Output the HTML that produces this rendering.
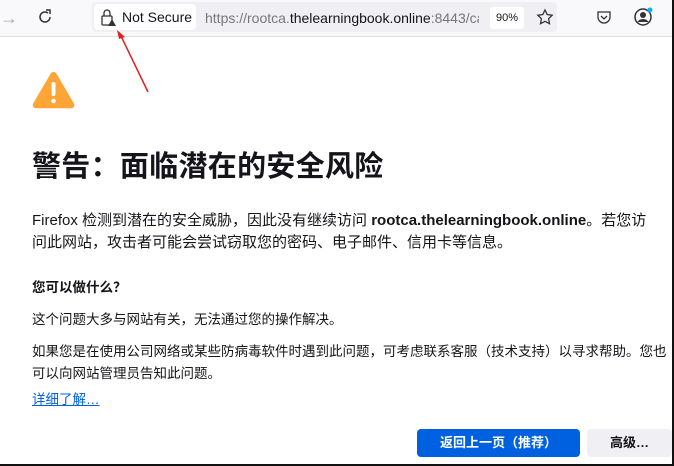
<!DOCTYPE html>
<html><head><meta charset="utf-8"><style>
*{margin:0;padding:0;box-sizing:border-box}
body{width:674px;height:466px;overflow:hidden;background:#fff;font-family:"Liberation Sans","Noto Sans CJK SC",sans-serif;position:relative;color:#15141a}
.tb{position:absolute;left:0;top:0;width:674px;height:37px;background:#f9f9fb;border-bottom:1px solid #e0e0e6}
.url{position:absolute;left:92px;top:2px;width:465px;height:30px;background:#f0f0f4;border-radius:4px}
.ns{position:absolute;left:94px;top:4px;width:102px;height:26px;background:#fff;border-radius:4px;font-size:14px;line-height:26px;padding-left:28px}
.ut{position:absolute;left:205px;top:10px;font-size:14px;color:#777;white-space:nowrap;width:274px;overflow:hidden}
.ut b{font-weight:normal;color:#15141a}
.zoom{position:absolute;left:490px;top:7px;width:34px;height:22px;background:#fff;border-radius:3px;font-size:11px;text-align:center;line-height:22px}
.t{position:absolute;white-space:nowrap}
h1{position:absolute;left:32px;top:143px;font-size:29px;font-weight:bold;letter-spacing:0.3px}
.p{position:absolute;left:32px;font-size:13.5px;line-height:22px;white-space:nowrap}
.btn1{position:absolute;left:417px;top:429px;width:163px;height:28px;background:#0061e0;border-radius:4px;color:#fff;font-size:13px;font-weight:bold;text-align:center;line-height:28px}
.btn2{position:absolute;left:587px;top:429px;width:85px;height:28px;background:#f0f0f4;border-radius:4px;font-size:13px;font-weight:bold;text-align:center;line-height:28px}
</style></head><body>
<div class="tb"></div>
<div class="t" style="left:0;top:8px;font-size:18px;color:#aaa">→</div>
<svg style="position:absolute;left:36px;top:8px" width="18" height="18" viewBox="0 0 18 18"><path d="M14 9a5 5 0 1 1-2-4" fill="none" stroke="#333" stroke-width="1.5"/><path d="M10 2h4v4" fill="none" stroke="#333" stroke-width="1.5"/></svg>
<div class="url"></div>
<div class="ns">Not Secure</div>
<svg style="position:absolute;left:100px;top:9px" width="18" height="18" viewBox="0 0 18 18"><rect x="2" y="7" width="10" height="9" rx="1" fill="none" stroke="#333" stroke-width="1.3"/><path d="M4 7V4a3 3 0 0 1 6 0v3" fill="none" stroke="#333" stroke-width="1.3"/><path d="M12 10l4 7h-8z" fill="#333"/></svg>
<div class="ut">https://rootca.<b>thelearningbook.online</b>:8443/ca</div>
<div class="zoom">90%</div>
<svg style="position:absolute;left:536px;top:8px" width="18" height="18" viewBox="0 0 18 18"><path d="M9 2l2.2 4.5 5 .7-3.6 3.5.9 5L9 13.3 4.5 15.7l.9-5L1.8 7.2l5-.7z" fill="none" stroke="#333" stroke-width="1.3"/></svg>
<svg style="position:absolute;left:596px;top:9px" width="16" height="16" viewBox="0 0 16 16"><path d="M2 3h12v5a6 6 0 0 1-12 0z" fill="none" stroke="#333" stroke-width="1.3"/><path d="M5 7l3 3 3-3" fill="none" stroke="#333" stroke-width="1.3"/></svg>
<svg style="position:absolute;left:633px;top:7px" width="20" height="20" viewBox="0 0 20 20"><circle cx="10" cy="10" r="8" fill="none" stroke="#333" stroke-width="1.5"/><circle cx="10" cy="8" r="3" fill="#333"/><path d="M4.5 15a6 5 0 0 1 11 0" fill="#333"/><circle cx="17" cy="3" r="2.5" fill="#00b3f4"/></svg>
<svg style="position:absolute;left:0;top:0" width="674" height="466"><line x1="120" y1="34" x2="148" y2="92" stroke="#e02020" stroke-width="1.5"/><path d="M117 30l8 7-6 2z" fill="#e02020"/></svg>
<svg style="position:absolute;left:31px;top:70px" width="45" height="40" viewBox="0 0 45 40"><path d="M22.5 2c1.5 0 2.5 1 3.3 2.3l17 29c1.3 2.4 0 5-2.7 5H5c-2.7 0-4-2.6-2.7-5l17-29C20 3 21 2 22.5 2z" fill="#ffa436"/><rect x="20.5" y="12" width="4" height="14" rx="2" fill="#fff"/><circle cx="22.5" cy="31" r="2.3" fill="#fff"/></svg>
<h1>警告：面临潜在的安全风险</h1>
<div class="p" style="top:210px;font-size:15px">Firefox 检测到潜在的安全威胁，因此没有继续访问 <b>rootca.thelearningbook.online</b>。若您访<br>问此网站，攻击者可能会尝试窃取您的密码、电子邮件、信用卡等信息。</div>
<div class="p" style="top:277px;font-weight:bold">您可以做什么？</div>
<div class="p" style="top:309px">这个问题大多与网站有关，无法通过您的操作解决。</div>
<div class="p" style="top:341px">如果您是在使用公司网络或某些防病毒软件时遇到此问题，可考虑联系客服（技术支持）以寻求帮助。您也<br>可以向网站管理员告知此问题。</div>
<div class="p" style="top:389px;color:#0061e0;text-decoration:underline">详细了解…</div>
<div class="btn1">返回上一页（推荐）</div>
<div class="btn2">高级…</div>
<div style="position:absolute;left:672px;top:0;width:2px;height:466px;background:#111"></div>
<div style="position:absolute;left:0;top:464px;width:674px;height:2px;background:#111"></div>
</body></html>
